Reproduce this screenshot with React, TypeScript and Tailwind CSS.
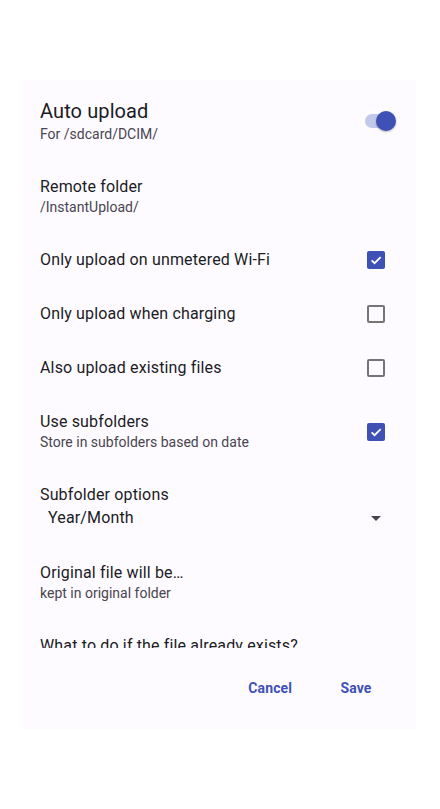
import React, { useState } from 'react';

const font = { fontFamily: 'Roboto, "Noto Sans", sans-serif' };

const Checkbox = ({ checked, onChange }: { checked: boolean; onChange: () => void }) => (
  <button
    onClick={onChange}
    className={`w-[18px] h-[18px] rounded-[2px] flex items-center justify-center ${
      checked ? 'bg-[#3f51b5]' : 'border-2 border-[#757575]'
    }`}
  >
    {checked && (
      <svg width="14" height="14" viewBox="0 0 24 24" fill="none">
        <path d="M4.5 12.5l5 5L20 7" stroke="white" strokeWidth="3" />
      </svg>
    )}
  </button>
);

const Row = ({
  title,
  subtitle,
  right,
}: {
  title: string;
  subtitle?: string;
  right?: React.ReactNode;
}) => (
  <div className="flex items-center justify-between pl-4 pr-[31px] py-4">
    <div className="flex flex-col">
      <span className="text-[16px] leading-[22px] tracking-[0.15px] text-[#1c1b1f]">{title}</span>
      {subtitle && <span className="text-[14px] leading-[19px] text-[#49454f]">{subtitle}</span>}
    </div>
    {right}
  </div>
);

const App = () => {
  const [auto, setAuto] = useState(true);
  const [checks, setChecks] = useState({ wifi: true, charging: false, existing: false, sub: true });

  const toggle = (k: keyof typeof checks) => setChecks({ ...checks, [k]: !checks[k] });

  return (
    <div className="min-h-screen bg-white pt-20 px-6" style={font}>
      <div className="bg-[#fdfbff] rounded-[3px] flex flex-col">
        <div className="h-[568px] overflow-hidden pt-px">
          <div className="flex items-center justify-between pl-4 pr-[20px] py-4">
            <div className="flex flex-col">
              <span className="text-[20px] leading-[28px] tracking-[0.1px] text-[#1c1b1f]">Auto upload</span>
              <span className="text-[14px] leading-[19px] text-[#49454f]">For /sdcard/DCIM/</span>
            </div>
            <button onClick={() => setAuto(!auto)} className="relative w-[31px] h-[20px] flex items-center">
              <div className={`w-[28px] h-[14px] rounded-full ${auto ? 'bg-[#c2c8ea]' : 'bg-[#bdbdbd]'}`} />
              <div
                className={`absolute top-0 w-[20px] h-[20px] rounded-full shadow-[0_1px_2px_rgba(0,0,0,0.3)] ${
                  auto ? 'left-[11px] bg-[#3f51b5]' : 'left-0 bg-[#f1f1f1]'
                }`}
              />
            </button>
          </div>

          <Row title="Remote folder" subtitle="/InstantUpload/" />
          <Row
            title="Only upload on unmetered Wi-Fi"
            right={<Checkbox checked={checks.wifi} onChange={() => toggle('wifi')} />}
          />
          <Row
            title="Only upload when charging"
            right={<Checkbox checked={checks.charging} onChange={() => toggle('charging')} />}
          />
          <Row
            title="Also upload existing files"
            right={<Checkbox checked={checks.existing} onChange={() => toggle('existing')} />}
          />
          <Row
            title="Use subfolders"
            subtitle="Store in subfolders based on date"
            right={<Checkbox checked={checks.sub} onChange={() => toggle('sub')} />}
          />

          <div className="px-4 py-4">
            <div className="text-[16px] leading-[22px] tracking-[0.15px] text-[#1c1b1f]">Subfolder options</div>
            <div className="flex items-center justify-between h-[24px] pl-2 pr-[19px]">
              <span className="text-[16px] tracking-[0.15px] text-[#1c1b1f]">Year/Month</span>
              <svg width="10" height="5" viewBox="0 0 10 5">
                <path d="M0 0h10L5 5z" fill="#49454f" />
              </svg>
            </div>
          </div>

          <Row title="Original file will be…" subtitle="kept in original folder" />
          <Row title="What to do if the file already exists?" />
        </div>

        <div className="h-[81px] flex items-center justify-end pr-[28px] gap-[16px]">
          <button className="px-4 h-9 text-[14px] font-bold tracking-[0.1px] text-[#3f51b5]">Cancel</button>
          <button className="w-16 h-9 text-[14px] font-bold tracking-[0.1px] text-[#3f51b5] text-center">Save</button>
        </div>
      </div>
    </div>
  );
};

export default App;
